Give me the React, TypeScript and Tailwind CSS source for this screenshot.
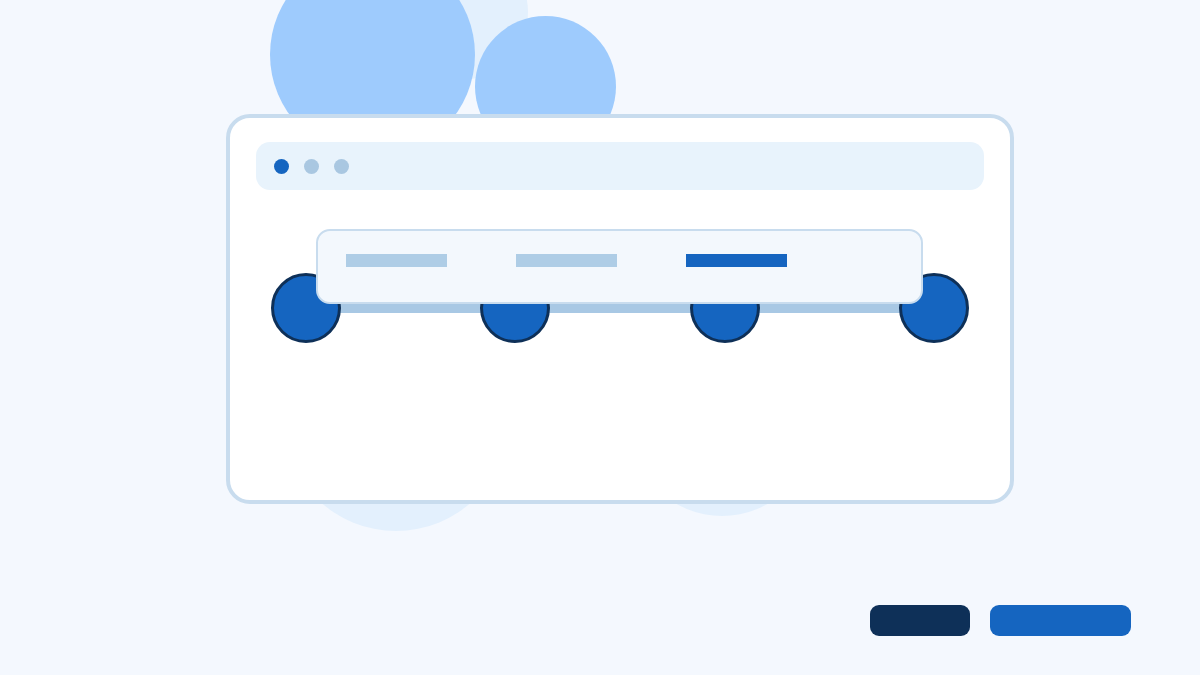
const steps = [0, 1, 2, 3];
const tabs = [
  { id: "a", active: false },
  { id: "b", active: false },
  { id: "c", active: true },
];

function Backdrop() {
  return (
    <div aria-hidden className="pointer-events-none absolute inset-0">
      <div className="absolute left-[392px] top-[-56px] h-[136px] w-[136px] rounded-full bg-[#e3f0fd]" />
      <div className="absolute left-[270px] top-[-48px] h-[205px] w-[205px] rounded-full bg-[#9ecbfd]" />
      <div className="absolute left-[475px] top-[16px] h-[141px] w-[141px] rounded-full bg-[#9ecbfd]" />
      <div className="absolute left-[283px] top-[305px] h-[226px] w-[226px] rounded-full bg-[#e3f0fd]" />
      <div className="absolute left-[630px] top-[332px] h-[184px] w-[184px] rounded-full bg-[#e3f0fd]" />
    </div>
  );
}

function Stepper() {
  return (
    <div className="relative mt-[83px] px-[15px]">
      <div className="flex items-center">
        {steps.map((step) => (
          <div key={step} className="contents">
            {step > 0 ? <div className="-mx-[2px] h-[10px] flex-1 bg-[#a8c8e4]" /> : null}
            <div className="relative h-[70px] w-[70px] shrink-0 rounded-full border-[3px] border-[#0e3058] bg-[#1565c0]" />
          </div>
        ))}
      </div>
      <div className="absolute left-[60px] top-[-44px] flex h-[75px] w-[607px] items-start gap-[69px] rounded-[14px] border-2 border-[#c8dcee] bg-[#f3f8fd] pl-[28px] pt-[23px]">
        {tabs.map((tab) => (
          <span
            key={tab.id}
            className={tab.active ? "h-[13px] w-[101px] bg-[#1565c0]" : "h-[13px] w-[101px] bg-[#aecde6]"}
          />
        ))}
      </div>
    </div>
  );
}

export default function App() {
  return (
    <div className="relative h-[675px] w-full overflow-hidden bg-[#f4f8fe]">
      <Backdrop />
      <div className="relative flex flex-col">
        <div className="pl-[226px] pt-[114px]">
          <div className="flex h-[390px] w-[788px] flex-col rounded-[24px] border-4 border-[#c8dcee] bg-white px-[26px] pt-[24px]">
            <div className="flex h-[48px] items-center gap-[15px] rounded-[14px] bg-[#e8f3fc] pl-[18px]">
              <span className="h-[15px] w-[15px] rounded-full bg-[#1565c0]" />
              <span className="h-[15px] w-[15px] rounded-full bg-[#a9c7e1]" />
              <span className="h-[15px] w-[15px] rounded-full bg-[#a9c7e1]" />
            </div>
            <Stepper />
          </div>
        </div>
        <div className="mt-[101px] flex justify-end gap-[20px] pr-[69px]">
          <button type="button" className="h-[31px] w-[100px] rounded-[9px] bg-[#0e3058]" />
          <button type="button" className="h-[31px] w-[141px] rounded-[9px] bg-[#1565c0]" />
        </div>
      </div>
    </div>
  );
}
